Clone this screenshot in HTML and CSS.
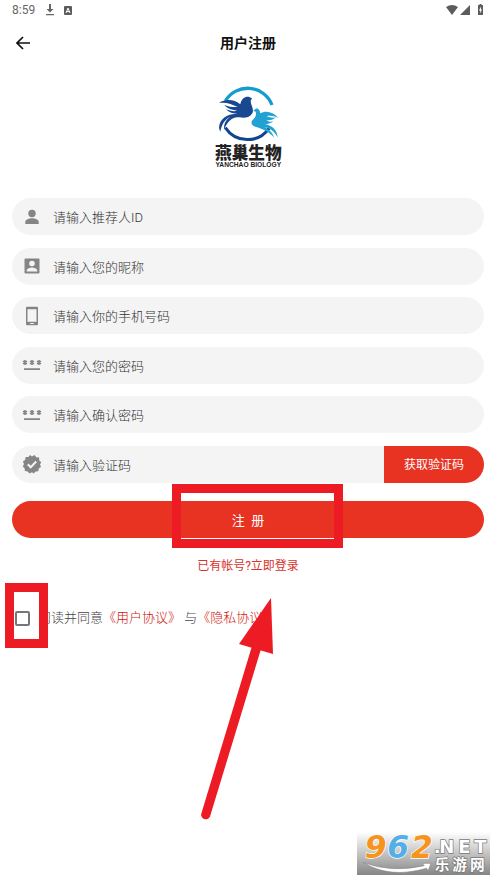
FILE: index.html
```html
<!DOCTYPE html>
<html lang="zh-CN">
<head>
<meta charset="utf-8">
<meta name="viewport" content="width=device-width, initial-scale=1">
<title>用户注册</title>
<link rel="stylesheet" href="styles.css">
</head>
<body>
<div class="page">
  <div class="status">
    <span class="clock">8:59</span>
    <svg class="st-icon" width="10" height="12" viewBox="0 0 10 12"><path d="M4 0h2v5h2.500L5 8.500 1.500 5H4zM1 10h8v1.300H1z" fill="#666"/></svg>
    <svg class="st-icon" width="8" height="9" viewBox="0 0 8 9"><rect width="8" height="9" rx="1" fill="#5c5c5c"/><path d="M2 7l2-5 2 5M2.700 5.500h2.600" fill="none" stroke="#fff"/></svg>
    <span class="spacer"></span>
    <svg width="38" height="12" viewBox="0 0 38 12"><path d="M0 3Q6 -1 12 3L6 11z" fill="#5c5c5c"/><path d="M24 1v10H14z" fill="#5c5c5c"/><path d="M32.500 1h1V0h2v1h1q.5 0 .5.500v9q0 .5-.5.500h-4q-.5 0-.5-.5v-9q0-.5.500-.5z" fill="#5c5c5c"/><path d="M35 2.500L33 6.500h1.200V9.500L36 5.500h-1z" fill="#fff"/></svg>
  </div>

  <header class="bar">
    <button class="back" type="button" aria-label="返回"><svg width="14" height="14" viewBox="0 0 14 14"><path d="M7 1L1 7l6 6M1 7h13" fill="none" stroke="#111" stroke-width="1.700"/></svg></button>
    <h1>用户注册</h1>
  </header>

  <div class="brand">
    <svg width="68" height="84" viewBox="42 162 204 252" role="img" aria-label="燕巢生物">
      <g transform="translate(36 156)">
        <path d="M40 57A78 78 0 0 1 180 69" fill="none" stroke="#129dce" stroke-width="10"/>
        <path d="M40 137A79 79 0 0 0 171 139" fill="none" stroke="#12458f" stroke-width="9"/>
        <path d="M21 63C42 49 68 53 85 67C88 50 98 43 110 44L120 49L116 56C117 72 127 82 121 94C114 106 98 110 82 106C62 102 46 118 36 143C35 122 45 108 61 102C42 108 30 122 25 149C14 130 29 105 53 98C62 95 70 96 76 96C57 94 48 89 42 82C54 87 66 89 76 86C55 83 43 77 37 69C52 75 66 76 77 75C61 67 42 60 21 63Z" fill="#174891"/>
        <path d="M124 86L133 79Q143 80 145 94C160 84 184 89 199 108C187 102 174 100 164 103C174 107 184 108 191 106C184 114 173 116 163 114C169 120 177 120 184 118C174 126 165 127 156 125C180 129 196 144 197 166C186 147 174 139 158 136C173 143 182 153 186 167C172 148 151 140 130 134C117 129 115 120 124 112C132 104 133 98 131 89Z" fill="#22a2d2"/>
      </g>
      <text class="logo-cn" x="145" y="388" text-anchor="middle">燕巢生物</text>
      <text class="logo-en" x="145" y="411" text-anchor="middle">YANCHAO BIOLOGY</text>
    </svg>
  </div>

  <form class="form">
    <div class="fields">
      <label class="field">
        <svg class="icon" viewBox="0 0 20 20"><circle cx="10" cy="6.500" r="3.700"/><path d="M3.300 17v-2c0-2.600 4-3.700 6.700-3.700s6.700 1.100 6.700 3.700v2z"/></svg>
        <input type="text" placeholder="请输入推荐人ID" aria-label="推荐人ID">
      </label>
      <label class="field">
        <svg class="icon" viewBox="0 0 20 20"><path fill-rule="evenodd" d="M3.500 2.500h13q1 0 1 1v13q0 1-1 1h-13q-1 0-1-1v-13q0-1 1-1zM10 4.700a2.800 2.800 0 1 0 0 5.600 2.800 2.800 0 1 0 0-5.600zM4.700 15.500h10.600v-1c0-2-3.500-3-5.300-3s-5.300 1-5.300 3z"/></svg>
        <input type="text" placeholder="请输入您的昵称" aria-label="昵称">
      </label>
      <label class="field">
        <svg class="icon" viewBox="0 0 20 20"><path fill-rule="evenodd" d="M5 .7h10q1 0 1 1v16.600q0 1-1 1H5q-1 0-1-1V1.700q0-1 1-1zM5.500 3.200v12.600h9V3.200zM8.300 17v1h3.400v-1z"/></svg>
        <input type="tel" placeholder="请输入你的手机号码" aria-label="手机号码">
      </label>
      <label class="field">
        <svg class="icon" viewBox="0 0 20 20"><path class="stars" d="M3 5v5M1 6.200l4 2.600M5 6.200L1 8.800M10 5v5M8 6.200l4 2.600M12 6.200L8 8.800M17 5v5M15 6.200l4 2.600M19 6.200l-4 2.600"/><path d="M2 13.300h16V15H2z"/></svg>
        <input type="password" placeholder="请输入您的密码" aria-label="密码">
      </label>
      <label class="field">
        <svg class="icon" viewBox="0 0 20 20"><path class="stars" d="M3 5v5M1 6.200l4 2.600M5 6.200L1 8.800M10 5v5M8 6.200l4 2.600M12 6.200L8 8.800M17 5v5M15 6.200l4 2.600M19 6.200l-4 2.600"/><path d="M2 13.300h16V15H2z"/></svg>
        <input type="password" placeholder="请输入确认密码" aria-label="确认密码">
      </label>
      <div class="field">
        <svg class="icon" viewBox="0 0 20 20"><path d="M10 2.400L12.500 1l1.800 2.300 2.800.2.200 2.900L19.200 8.200 18 10.500l1 2.500-2.300 1.500-.4 2.800-2.800.2L11.800 19.500 10 18.200 7.500 19.500l-1.800-2.100-2.800-.3-.3-2.800L.8 12.500 2 10 .9 7.500l2.300-1.700.4-2.700 2.800-.2L8 1z"/><path d="M5.800 10.300l2.900 2.900 5.500-5.700" fill="none" stroke="#f4f4f4" stroke-width="2"/></svg>
        <input type="text" placeholder="请输入验证码" aria-label="验证码">
        <button class="code" type="button">获取验证码</button>
      </div>
    </div>

    <button class="submit" type="submit">注&nbsp; 册</button>
    <a class="login" href="#login">已有帐号?立即登录</a>

    <div class="agree">
      <input type="checkbox" id="agree">
      <p><label for="agree">阅读并同意</label><a href="#terms">《用户协议》</a> 与<a href="#privacy">《隐私协议》</a></p>
    </div>
  </form>

  <div class="mark mark-submit"></div>
  <div class="mark mark-check"></div>
  <svg class="arrow" width="80" height="230" viewBox="0 0 80 230"><path d="M52 48L1.500 215A4.500 4.500 0 0 0 10 218.500L61 51z" fill="#ed1c24"/><path d="M71 0L39 46l34 10z" fill="#ed1c24"/></svg>

  <svg class="watermark" width="133" height="43" viewBox="51 36 399 129">
    <defs>
      <linearGradient id="shade" x1="0" y1="0" x2="0" y2="1"><stop offset="0" stop-color="#fff"/><stop offset=".5" stop-color="#c4c4c4"/><stop offset="1" stop-color="#858585"/></linearGradient>
    </defs>
    <rect x="51" y="36" width="399" height="129" fill="url(#shade)"/>
    <path d="M69 127Q155 160 253 137L246 130 273 130 264 153 260 145Q148 177 69 127Z" fill="#fff" stroke="#888" stroke-width="2"/>
    <text class="wm-num" y="113"><tspan x="74" fill="#f7941d">9</tspan><tspan x="142" fill="#55aee5">6</tspan><tspan x="213" fill="#f7941d">2</tspan></text>
    <text class="wm-net" y="100"><tspan x="281">.</tspan><tspan x="298">N</tspan><tspan x="355">E</tspan><tspan x="403">T</tspan></text>
    <text class="wm-cn" y="149"><tspan x="284">乐</tspan><tspan x="337">游</tspan><tspan x="390">网</tspan></text>
  </svg>
</div>
</body>
</html>
```
FILE: styles.css
```css
* { box-sizing: border-box; }

body {
  margin: 0;
  background: #fff;
  color: #666;
  font: 13px/20px Roboto, "Noto Sans CJK SC", sans-serif;
}

button, input { font: inherit; }
button { border: 0; padding: 0; cursor: pointer; }
a { color: #d8342c; text-decoration: none; }

.page {
  position: relative;
  min-height: 100vh;
}

.status {
  display: flex;
  align-items: center;
  height: 20px;
  padding: 0 12px;
  font-size: 12px;
}
.clock { margin-right: 10px; }
.st-icon { margin-right: 9px; }
.spacer { flex: 1; }

.bar {
  display: grid;
  grid-template-columns: 40px 1fr 40px;
  align-items: center;
  height: 46px;
  padding: 0 4px;
}
.bar h1 {
  margin: 0;
  color: #111;
  font-size: 14px;
  font-weight: 700;
  text-align: center;
}
.back {
  display: flex;
  padding: 12px;
  background: none;
}

.brand {
  display: flex;
  justify-content: center;
  padding: 18px 0 30px;
}
.logo-cn {
  font: 900 50px "Noto Sans CJK SC", sans-serif;
  fill: #222;
}
.logo-en {
  font: 700 20px "Liberation Sans", sans-serif;
  fill: #222;
}

.form {
  display: flex;
  flex-direction: column;
  padding: 0 12px;
  font-weight: 300;
}
.fields {
  display: flex;
  flex-direction: column;
  justify-content: space-between;
  min-height: 285px;
}
.field {
  display: flex;
  align-items: center;
  height: 37px;
  padding-left: 10px;
  border-radius: 19px;
  background: #f4f4f4;
  overflow: hidden;
}
.icon {
  flex: none;
  width: 20px;
  height: 20px;
  margin-right: 11px;
  fill: #858585;
}
.stars { stroke: #858585; stroke-width: 1.6; }
.field input {
  flex: 1;
  min-width: 0;
  height: 100%;
  padding: 2px 0 0;
  border: 0;
  outline: 0;
  background: none;
  color: #333;
}
.field input::placeholder { color: #333; opacity: 1; }

.code {
  width: 100px;
  height: 37px;
  padding-top: 2px;
  background: #e83323;
  color: #fff;
  font-size: 12px;
  font-weight: 400;
}
.submit {
  height: 37px;
  padding-top: 3px;
  margin-top: 18px;
  border-radius: 19px;
  background: #e83323;
  color: #fff;
  font-weight: 400;
}
.login {
  align-self: center;
  margin-top: 18px;
  font-size: 12px;
  font-weight: 400;
}

.agree {
  display: flex;
  align-items: center;
  gap: 8px;
  margin-top: 32px;
  padding-left: 3px;
  color: #444;
}
.agree a { color: #d0150c; }
.agree input {
  appearance: none;
  width: 15px;
  height: 15px;
  margin: 0;
  border: 2px solid #777;
  border-radius: 2px;
}
.agree input:checked { background: #e83323; }
.agree p { margin: 0; }

.mark {
  position: absolute;
  border: 9px solid #ed1c24;
  pointer-events: none;
}
.mark-submit { left: 172px; top: 484px; width: 171px; height: 64px; }
.mark-check { left: 5px; top: 583px; width: 43px; height: 65px; }
.arrow {
  position: absolute;
  left: 200px;
  top: 598px;
  pointer-events: none;
}

.watermark {
  position: absolute;
  right: 6px;
  bottom: 6px;
  overflow: visible;
}
.wm-num {
  font: italic 700 94px "DejaVu Sans", sans-serif;
  stroke: #fff;
  stroke-width: 4px;
  paint-order: stroke;
}
.wm-net {
  font: 700 54px "DejaVu Sans", sans-serif;
  fill: #fff;
  stroke: #777;
  stroke-width: 4px;
  paint-order: stroke;
}
.wm-cn {
  font: 700 44px "Noto Sans CJK SC", sans-serif;
  fill: #fff;
  stroke: #777;
  stroke-width: 4px;
  paint-order: stroke;
}
```
